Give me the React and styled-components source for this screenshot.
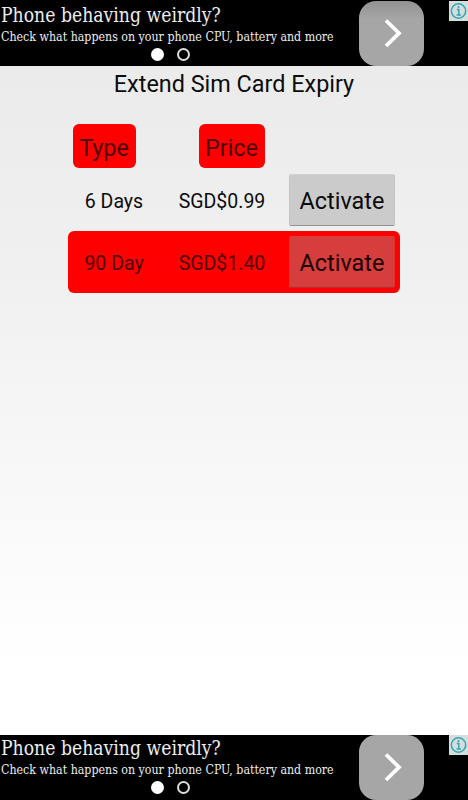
import React from 'react'
import styled, { createGlobalStyle } from 'styled-components'

const plans = [
  { type: '6 Days', price: 'SGD$0.99' },
  { type: '90 Day', price: 'SGD$1.40', active: true },
]

const GlobalStyle = createGlobalStyle`
  * {
    box-sizing: border-box;
  }
  body {
    margin: 0;
    font-family: Roboto, 'Liberation Sans', sans-serif;
    color: #0c0c0c;
  }
`

const Screen = styled.div`
  width: 468px;
  height: 800px;
  overflow: hidden;
  display: flex;
  flex-direction: column;
  background: #000;
`

const Banner = styled.aside`
  height: ${({ $bottom }) => ($bottom ? 65 : 66)}px;
  flex: none;
  display: grid;
  grid-template-columns: 359px 65px 1fr;
  padding-top: ${({ $bottom }) => ($bottom ? 0 : 1)}px;
  background: #000;
  color: #ededed;
  font-family: 'DejaVu Serif Condensed', 'DejaVu Serif', serif;
  white-space: nowrap;
`

const Copy = styled.div`
  display: flex;
  flex-direction: column;
  align-items: flex-start;
  padding-left: 1px;
  margin-top: ${({ $bottom }) => ($bottom ? -1 : 0)}px;
`

const Headline = styled.strong`
  font-size: 21px;
  font-weight: 400;
  line-height: 29px;
  transform: scaleX(0.913);
  transform-origin: 0 0;
`

const Tagline = styled.span`
  font-size: 13px;
  line-height: 14px;
  transform: scaleX(0.945);
  transform-origin: 0 0;
`

const Dots = styled.div`
  display: flex;
  gap: 13px;
  margin: 4px 0 0 150px;
`

const Dot = styled.i`
  width: 13px;
  height: 13px;
  border: 2px solid ${({ $filled }) => ($filled ? '#fff' : '#ddd')};
  border-radius: 50%;
  background: ${({ $filled }) => ($filled ? '#fff' : 'none')};
`

const GoButton = styled.button`
  width: 65px;
  height: 65px;
  padding: 0;
  border: 0;
  border-radius: 17px;
  background: ${({ $bottom }) => ($bottom ? '#a6a6a6' : 'linear-gradient(#929292, #a6a6a6 28%)')};
  svg {
    display: block;
  }
`

const AdInfo = styled.span`
  justify-self: end;
  width: 19px;
  height: 20px;
  background: #d5dedf;
  svg {
    display: block;
  }
`

const Content = styled.main`
  flex: 1;
  display: flex;
  flex-direction: column;
  align-items: center;
  background: linear-gradient(#ebebeb, #f0f0f0 30%, #fff 90%);
`

const Title = styled.h1`
  margin: 4px 0 0;
  font-size: 23.4px;
  font-weight: 400;
  line-height: 29px;
  white-space: nowrap;
`

const Table = styled.section`
  width: 332px;
  margin-top: 25px;
`

const Header = styled.header`
  display: flex;
  gap: 63px;
  padding-left: 4.5px;
`

const Badge = styled.div`
  width: ${({ $width }) => $width}px;
  height: 44px;
  border-radius: 6px;
  background: #fe0000;
  color: #4e0000;
  font-size: 23.4px;
  line-height: 48px;
  text-align: center;
`

const Row = styled.div`
  height: 62px;
  display: grid;
  grid-template-columns: 84px 132px 107px;
  align-items: center;
  padding-left: 4px;
  margin-top: ${({ $active }) => ($active ? 0 : 1)}px;
  border-radius: 6px;
  background: ${({ $active }) => ($active ? '#fe0000' : 'none')};
  color: ${({ $active }) => ($active ? '#500000' : 'inherit')};
`

const Cell = styled.span`
  padding-top: 3px;
  font-size: 19.5px;
  line-height: 24px;
  text-align: center;
  white-space: nowrap;
`

const ActivateButton = styled.button`
  width: 106px;
  height: 52px;
  margin-left: 1px;
  padding: 1px 0 0;
  border: 1px solid;
  border-color: ${({ $active }) =>
    $active ? '#e23a3a #dc3030 #b52c2c' : '#d2d2d2 #c4c4c4 #929292'};
  border-radius: 2px;
  background: ${({ $active }) => ($active ? '#d63d3d' : '#cbcbcb')};
  color: ${({ $active }) => ($active ? '#1c0000' : '#0c0c0c')};
  font-family: inherit;
  font-size: 23.4px;
`

const Ad = ({ bottom }) => (
  <Banner $bottom={bottom}>
    <Copy $bottom={bottom}>
      <Headline>Phone behaving weirdly?</Headline>
      <Tagline>Check what happens on your phone CPU, battery and more</Tagline>
      <Dots>
        <Dot $filled />
        <Dot />
      </Dots>
    </Copy>
    <GoButton $bottom={bottom} aria-label='Open'>
      <svg width='65' height='65' viewBox='0 0 65 65' fill='none' stroke='#fff' strokeWidth='3.8'>
        <path d='M27 19.5 40 32.2 27 45' />
      </svg>
    </GoButton>
    <AdInfo>
      <svg width='19' height='20' viewBox='0 0 19 20' fill='none' stroke='#35a5ae'>
        <circle cx='9.5' cy='10' r='7.2' strokeWidth='1.5' />
        <path d='M7.8 8.5h2v5.2M7.5 13.9h4.4' strokeWidth='1.5' />
        <circle cx='9.5' cy='6' r='1.1' fill='#35a5ae' stroke='none' />
      </svg>
    </AdInfo>
  </Banner>
)

const App = () => {
  return (
    <>
      <GlobalStyle />
      <Screen>
        <Ad />
        <Content>
          <Title>Extend Sim Card Expiry</Title>
          <Table>
            <Header>
              <Badge $width={63}>Type</Badge>
              <Badge $width={66}>Price</Badge>
            </Header>
            {plans.map(({ type, price, active }) => (
              <Row key={type} $active={active}>
                <Cell>{type}</Cell>
                <Cell>{price}</Cell>
                <ActivateButton $active={active}>Activate</ActivateButton>
              </Row>
            ))}
          </Table>
        </Content>
        <Ad bottom />
      </Screen>
    </>
  )
}

export default App
